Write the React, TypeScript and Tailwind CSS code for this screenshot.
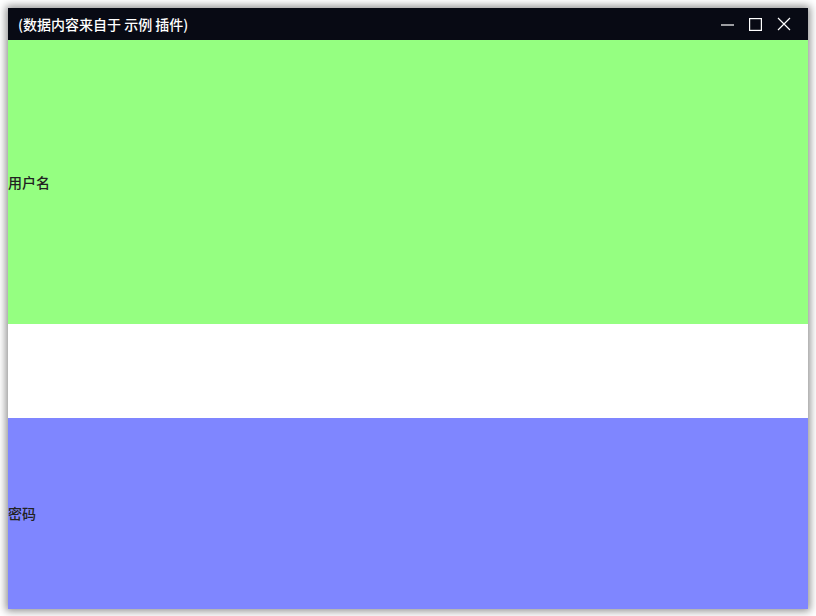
const App = () => {
    return (
        <div className="w-[816px] h-[616px] bg-white pt-2 pl-2" style={{ fontFamily: '"Noto Sans CJK SC", "Noto Sans", sans-serif' }}>
            <div className="w-[800px] h-[601px] flex flex-col shadow-[0_0_8px_2px_rgba(0,0,0,0.45)]">
                {/* Title bar */}
                <div className="h-8 bg-[#080a14] flex items-center justify-between pl-[10px] pr-[17px]">
                    <span className="text-white text-[14px] leading-none font-medium">(数据内容来自于 示例 插件)</span>
                    <div className="flex items-center gap-[15px] text-white">
                        <svg width="13" height="13" viewBox="0 0 13 13" fill="none" stroke="currentColor" strokeWidth="1.2">
                            <path d="M0 7h13" />
                        </svg>
                        <svg width="13" height="13" viewBox="0 0 13 13" fill="none" stroke="currentColor" strokeWidth="1.2">
                            <rect x="0.6" y="0.6" width="11.8" height="11.8" />
                        </svg>
                        <svg width="14" height="14" viewBox="0 0 14 14" fill="none" stroke="currentColor" strokeWidth="1.2">
                            <path d="M1 1l12 12M13 1L1 13" />
                        </svg>
                    </div>
                </div>
                {/* Username row */}
                <div className="h-[284px] bg-[#95ff81] flex items-center">
                    <span className="text-[14px] text-[#222] font-medium">用户名</span>
                </div>
                {/* Spacer */}
                <div className="h-[94px] bg-white"></div>
                {/* Password row */}
                <div className="flex-1 bg-[#7f86ff] flex items-center">
                    <span className="text-[14px] text-[#222] font-medium">密码</span>
                </div>
            </div>
        </div>
    )
}

export default App
